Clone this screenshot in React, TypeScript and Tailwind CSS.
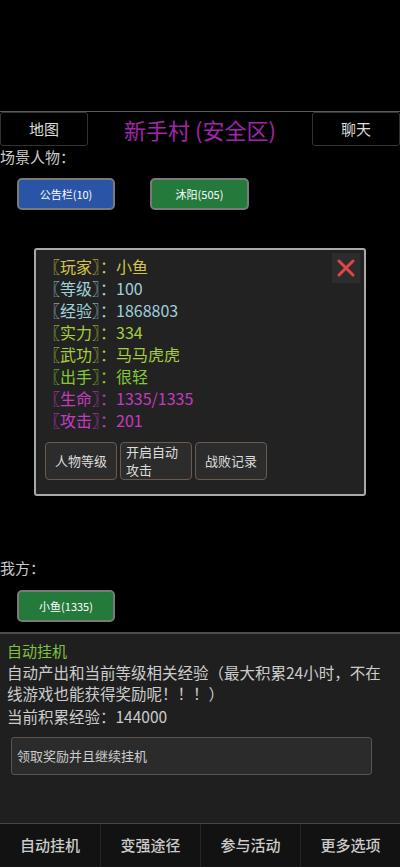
import React from 'react';

const FONT = "font-['Noto_Sans_CJK_SC','Noto_Sans',sans-serif]";

const STATS = [
  { label: '玩家', value: '小鱼', color: 'text-[#d2c64a]' },
  { label: '等级', value: '100', color: 'text-[#9fd0dc]' },
  { label: '经验', value: '1868803', color: 'text-[#9fd0dc]' },
  { label: '实力', value: '334', color: 'text-[#a6cf3c]' },
  { label: '武功', value: '马马虎虎', color: 'text-[#a6cf3c]' },
  { label: '出手', value: '很轻', color: 'text-[#86c832]' },
  { label: '生命', value: '1335/1335', color: 'text-[#c23cc0]' },
  { label: '攻击', value: '201', color: 'text-[#c23cc0]' },
];

const NAV = ['自动挂机', '变强途径', '参与活动', '更多选项'];

export default function App() {
  return (
    <div className={`w-[400px] h-[867px] bg-black flex flex-col overflow-hidden ${FONT}`}>
      <div className="h-[111px] shrink-0" />
      <div className="h-px bg-[#5c5c5c] shrink-0" />

      {/* Header */}
      <div className="flex items-center h-[34px] shrink-0">
        <div className="w-[88px] h-full border border-[#333] rounded-[3px] flex items-center justify-center text-[15px] text-[#ddd]">
          地图
        </div>
        <div className="flex-1 text-center text-[22px] text-[#a126ab] leading-[30px]">新手村 (安全区)</div>
        <div className="w-[88px] h-full border border-[#333] rounded-[3px] flex items-center justify-center text-[15px] text-[#ddd]">
          聊天
        </div>
      </div>

      <div className="text-[15px] text-[#ccc] leading-[20px] mt-[1px]">场景人物：</div>
      <div className="flex gap-[35px] pl-[17px] mt-[11px]">
        <button className="w-[98px] h-[32px] rounded-[5px] border-2 border-[#7a7a7a] bg-[#2a55a6] text-[11px] text-white">
          公告栏(10)
        </button>
        <button className="w-[99px] h-[32px] rounded-[5px] border-2 border-[#7a7a7a] bg-[#237a3b] text-[11px] text-white">
          沐阳(505)
        </button>
      </div>

      {/* Player info panel */}
      <div className="relative mt-[38px] ml-[34px] w-[332px] h-[248px] shrink-0 border-2 border-[#a9a9a9] rounded-[3px] bg-[#222] pt-[5px] pl-[8px]">
        <button className="absolute right-[4px] top-[3px] w-[28px] h-[30px] bg-[#2c2c2c] flex items-center justify-center">
          <svg width="22" height="22" viewBox="0 0 22 22">
            <path d="M4 4 L18 18 M18 4 L4 18" stroke="#e04646" strokeWidth="3" strokeLinecap="round" />
          </svg>
        </button>
        {STATS.map((s) => (
          <div key={s.label} className={`text-[16px] leading-[22px] ${s.color}`}>
            〖{s.label}〗：{s.value}
          </div>
        ))}
        <div className="flex gap-[3px] mt-[11px] ml-[1px]">
          <button className="w-[72px] h-[38px] border border-[#6b5a4e] rounded-[4px] bg-[#2c2c2c] text-[13px] text-[#ddd]">
            人物等级
          </button>
          <button className="w-[72px] h-[38px] border border-[#6b5a4e] rounded-[4px] bg-[#2c2c2c] text-[13px] text-[#ddd] leading-[18px] text-left pl-[5px]">
            开启自动
            <br />
            攻击
          </button>
          <button className="w-[72px] h-[38px] border border-[#6b5a4e] rounded-[4px] bg-[#2c2c2c] text-[13px] text-[#ddd]">
            战败记录
          </button>
        </div>
      </div>

      <div className="text-[15px] text-[#ccc] leading-[20px] mt-[62px]">我方：</div>
      <div className="pl-[17px] mt-[12px]">
        <button className="w-[98px] h-[32px] rounded-[5px] border-2 border-[#7a7a7a] bg-[#237a3b] text-[11px] text-white">
          小鱼(1335)
        </button>
      </div>

      <div className="h-[2px] bg-[#4d4d4d] mt-[10px] shrink-0" />

      {/* Auto idle panel */}
      <div className="flex-1 bg-[#1f1f1f] px-[7px] pt-[6px]">
        <div className="text-[15px] leading-[22px] text-[#7fc242]">自动挂机</div>
        <div className="text-[15.5px] leading-[21px] text-[#ccc]">
          自动产出和当前等级相关经验（最大积累24小时，不在线游戏也能获得奖励呢！！！）
        </div>
        <div className="text-[15.5px] leading-[22px] text-[#ccc] mt-[1px]">当前积累经验：144000</div>
        <button className="mt-[10px] ml-[4px] w-[361px] h-[38px] border border-[#5c534b] rounded-[3px] bg-[#2b2b2b] text-left pl-[5px] text-[13px] text-[#ccc]">
          领取奖励并且继续挂机
        </button>
      </div>

      {/* Bottom nav */}
      <div className="grid grid-cols-4 h-[44px] shrink-0 border-t border-[#4a4540] bg-[#121212]">
        {NAV.map((n, i) => (
          <div
            key={n}
            className={`flex items-center justify-center text-[15px] font-medium text-[#ccc] ${i > 0 ? 'border-l border-[#2c241e]' : ''}`}
          >
            {n}
          </div>
        ))}
      </div>
    </div>
  );
}
